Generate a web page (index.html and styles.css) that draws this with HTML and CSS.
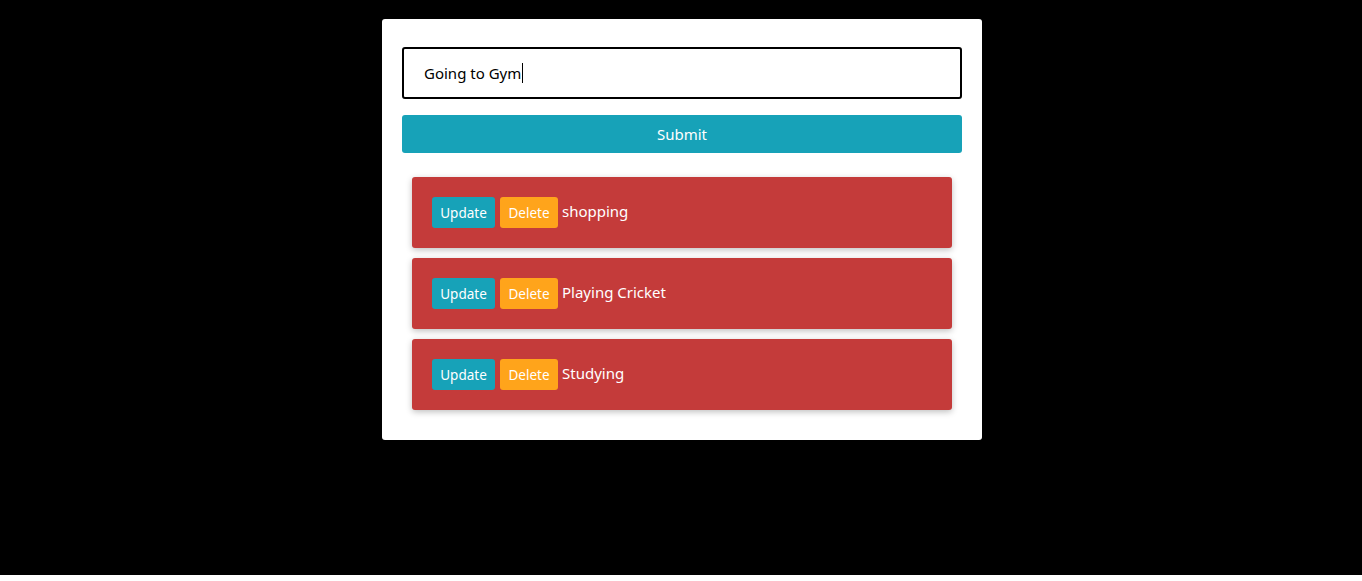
FILE: index.html
```html
<!DOCTYPE html>
<html>
<head>
<meta charset="utf-8">
<link rel="stylesheet" href="styles.css">
</head>
<body>
<div class="screen">
  <div class="card">
    <div class="input-box"><span class="input-text">Going to Gym</span><span class="caret"></span></div>
    <button class="submit">Submit</button>
    <ul class="list">
      <li class="item"><button class="btn update">Update</button><button class="btn delete">Delete</button><span class="label">shopping</span></li>
      <li class="item"><button class="btn update">Update</button><button class="btn delete">Delete</button><span class="label">Playing Cricket</span></li>
      <li class="item"><button class="btn update">Update</button><button class="btn delete">Delete</button><span class="label">Studying</span></li>
    </ul>
  </div>
</div>
</body>
</html>
```

FILE: styles.css
```css
html { background: #ffffff; }
body {
  margin: 0;
  font-family: "Noto Sans", "Open Sans", sans-serif;
}
.screen {
  background: #000;
  height: 575px;
  padding-top: 19px;
  padding-left: 2px;
  box-sizing: border-box;
}
.card {
  width: 600px;
  margin: 0 auto;
  background: #fff;
  border-radius: 3px;
  padding: 28px 20px 30px;
  box-sizing: border-box;
}
.input-box {
  height: 52px;
  border: 2px solid #000;
  border-radius: 3px;
  box-sizing: border-box;
  display: flex;
  align-items: center;
  padding-left: 20px;
  font-size: 15px;
  color: #000;
}
.caret {
  width: 1px;
  height: 20px;
  background: #000;
  margin-left: 1px;
}
.submit {
  display: block;
  width: 100%;
  height: 38px;
  margin-top: 16px;
  border: none;
  border-radius: 3px;
  background: #17a2b8;
  color: #fff;
  font-family: inherit;
  font-size: 15px;
}
.list {
  list-style: none;
  margin: 24px 10px 0;
  padding: 0;
  display: flex;
  flex-direction: column;
  gap: 10px;
}
.item {
  background: #c43b3a;
  height: 71px;
  box-sizing: border-box;
  padding: 20px;
  border-radius: 3px;
  display: flex;
  align-items: flex-start;
  box-shadow: 0 2px 6px rgba(0,0,0,0.25);
}
.btn {
  height: 31px;
  border: none;
  border-radius: 3px;
  color: #fff;
  font-family: inherit;
  font-size: 13.5px;
  padding: 0;
  margin-right: 5px;
}
.update { background: #17a2b8; width: 63px; }
.delete { background: #ffa41b; width: 58px; margin-right: 4px; }
.label {
  color: #fff;
  font-size: 15px;
  line-height: 28px;
}
```
